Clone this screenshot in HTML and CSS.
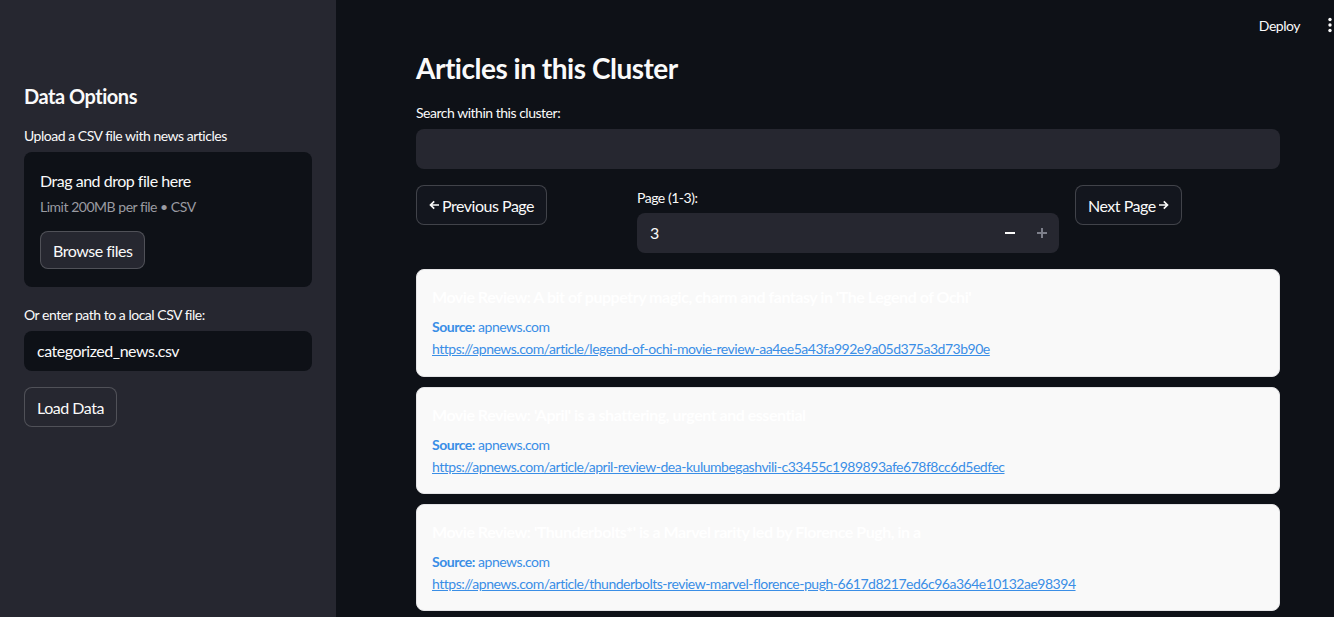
FILE: index.html
```html
<!DOCTYPE html>
<html>
<head>
<meta charset="utf-8">
<link rel="stylesheet" href="styles.css">
</head>
<body>
<div class="app">
  <aside class="sidebar">
    <h2 class="side-title">Data Options</h2>
    <div class="label">Upload a CSV file with news articles</div>
    <div class="dropzone">
      <div class="dz-title">Drag and drop file here</div>
      <div class="dz-sub">Limit 200MB per file • CSV</div>
      <button class="btn">Browse files</button>
    </div>
    <div class="label label-gap">Or enter path to a local CSV file:</div>
    <div class="input dark">categorized_news.csv</div>
    <button class="btn btn-load">Load Data</button>
  </aside>
  <main class="main">
    <header class="topbar">
      <span class="deploy">Deploy</span>
      <svg class="kebab" width="4" height="16" viewBox="0 0 4 16"><circle cx="2" cy="2.5" r="1.7" fill="#fafafa"/><circle cx="2" cy="8" r="1.7" fill="#fafafa"/><circle cx="2" cy="13.5" r="1.7" fill="#fafafa"/></svg>
    </header>
    <div class="content">
      <h1 class="title">Articles in this Cluster</h1>
      <div class="label">Search within this cluster:</div>
      <div class="input search"></div>
      <div class="pager">
        <div><button class="btn btn-main"><svg class="arrow" width="11" height="10" viewBox="0 0 11 10"><path d="M10 5H1.5M5.2 1.3L1.5 5L5.2 8.7" fill="none" stroke="#fafafa" stroke-width="1.7"/></svg>Previous Page</button></div>
        <div>
          <div class="label small-label">Page (1-3):</div>
          <div class="input number">
            <span class="num">3</span>
            <span class="step minus"><svg width="10" height="2" viewBox="0 0 10 2"><rect width="10" height="2" fill="#fafafa"/></svg></span>
            <span class="step plus"><svg width="10" height="10" viewBox="0 0 10 10"><rect x="4" y="0" width="2" height="10" fill="#7d7f8a"/><rect x="0" y="4" width="10" height="2" fill="#7d7f8a"/></svg></span>
          </div>
        </div>
        <div><button class="btn btn-main">Next Page<svg class="arrow arrow-r" width="11" height="10" viewBox="0 0 11 10"><path d="M1 5H9.5M5.8 1.3L9.5 5L5.8 8.7" fill="none" stroke="#fafafa" stroke-width="1.7"/></svg></button></div>
      </div>
      <div class="cards">
        <div class="card">
          <div class="card-title">Movie Review: A bit of puppetry magic, charm and fantasy in 'The Legend of Ochi'</div>
          <div class="source"><b>Source:</b> apnews.com</div>
          <a class="link" href="#">https://apnews.com/article/legend-of-ochi-movie-review-aa4ee5a43fa992e9a05d375a3d73b90e</a>
        </div>
        <div class="card">
          <div class="card-title">Movie Review: 'April' is a shattering, urgent and essential</div>
          <div class="source"><b>Source:</b> apnews.com</div>
          <a class="link" href="#">https://apnews.com/article/april-review-dea-kulumbegashvili-c33455c1989893afe678f8cc6d5edfec</a>
        </div>
        <div class="card">
          <div class="card-title">Movie Review: 'Thunderbolts*' is a Marvel rarity led by Florence Pugh, in a</div>
          <div class="source"><b>Source:</b> apnews.com</div>
          <a class="link" href="#">https://apnews.com/article/thunderbolts-review-marvel-florence-pugh-6617d8217ed6c96a364e10132ae98394</a>
        </div>
      </div>
    </div>
  </main>
</div>
</body>
</html>
```

FILE: styles.css
```css
* { box-sizing: border-box; }
html, body { margin: 0; padding: 0; }
body {
  font-family: "Source Sans Pro", Lato, "Liberation Sans", sans-serif;
  letter-spacing: -0.03em;
  color: #fafafa;
  background: #0e1117;
  height: 617px;
  overflow: hidden;
}
.app { display: flex; height: 617px; }
.sidebar {
  width: 336px;
  flex: none;
  background: #262730;
  padding: 83px 24px 0 24px;
}
.side-title {
  margin: 0 0 18px 0;
  font-size: 20px;
  font-weight: 700;
  line-height: 26px;
}
.label {
  font-size: 14px;
  line-height: 18px;
  margin-bottom: 7px;
}
.label-gap { margin-top: 19px; margin-bottom: 7px; }
.dropzone {
  background: #0e1117;
  border-radius: 8px;
  padding: 18px 16px 18px 16px;
}
.dz-title { font-size: 16px; line-height: 22px; }
.dz-sub { font-size: 14px; line-height: 18px; color: #9a9ba2; margin-top: 6px; }
.btn {
  font-family: inherit;
  letter-spacing: inherit;
  font-size: 16px;
  color: #fafafa;
  background: #262730;
  border: 1px solid rgba(250,250,250,0.2);
  border-radius: 8px;
  height: 40px;
  padding: 0 12px;
  cursor: pointer;
  display: inline-flex;
  align-items: center;
  vertical-align: top;
}
.dropzone .btn { margin-top: 15px; height: 38px; }
.btn-main { background: #13161e; }
.btn-load { margin-top: 16px; }
.arrow { margin-right: 2px; }
.arrow-r { margin-right: 0; margin-left: 2px; }
.input {
  border-radius: 8px;
  height: 40px;
  font-size: 16px;
  line-height: 40px;
}
.input.dark { background: #0e1117; padding-left: 13px; }
.main { flex: 1; display: flex; flex-direction: column; }
.topbar {
  height: 50px;
  display: flex;
  align-items: center;
  justify-content: flex-end;
  padding-right: 2px;
}
.deploy { font-size: 14px; margin-right: 28px; }
.content { width: 864px; margin-left: 80px; }
.title {
  margin: 0 0 18px 0;
  font-size: 28px;
  font-weight: 700;
  line-height: 36px;
}
.search { background: #262730; }
.pager {
  display: grid;
  grid-template-columns: 205fr 422fr 205fr;
  column-gap: 16px;
  margin-top: 16px;
}
.small-label { margin: 4px 0 6px 0; }
.number {
  background: #262730;
  display: flex;
  align-items: center;
  padding-left: 13px;
}
.num { flex: 1; }
.step { width: 32px; display: flex; align-items: center; justify-content: center; height: 40px; }
.plus { margin-right: 1px; }
.cards { margin-top: 16px; display: flex; flex-direction: column; gap: 10px; }
.card {
  background: #f9f9f9;
  border: 1px solid #e4e4e6;
  border-radius: 8px;
  height: 107px;
  padding: 14px 15px 0 15px;
}
.card:first-child { height: 108px; }
.card-title {
  color: #ffffff;
  font-size: 16px;
  font-weight: 700;
  line-height: 24px;
  margin-top: 1px;
}
.source {
  color: #3a8ee6;
  font-size: 14px;
  line-height: 20px;
  margin-top: 8px;
}
.source b { font-weight: 700; }
.link {
  display: block;
  color: #3a8ee6;
  font-size: 14px;
  line-height: 20px;
  margin-top: 2px;
}
```
